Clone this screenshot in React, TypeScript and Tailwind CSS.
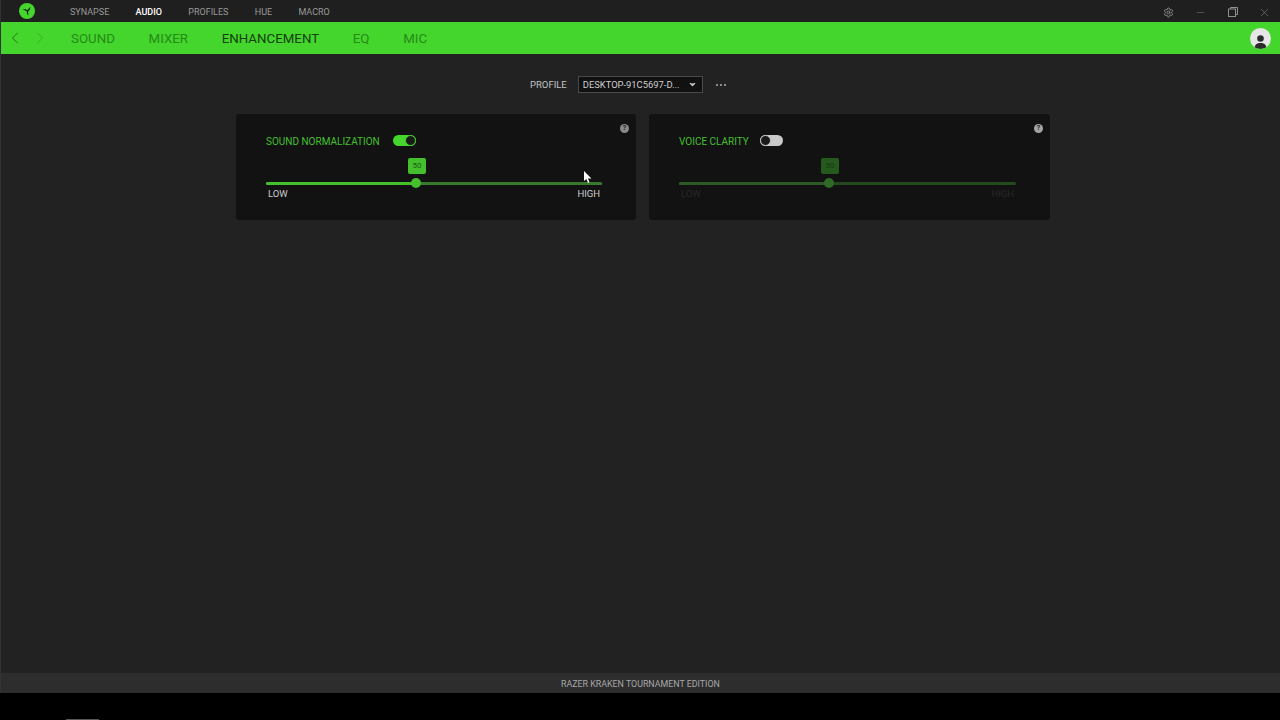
import { Settings, Minus, X, ChevronLeft, ChevronRight, ChevronDown } from 'lucide-react';

const topTabs = ['SYNAPSE', 'AUDIO', 'PROFILES', 'HUE', 'MACRO'];
const subTabs = ['SOUND', 'MIXER', 'ENHANCEMENT', 'EQ', 'MIC'];

const Logo = () => (
  <svg width="16" height="16" viewBox="0 0 16 16">
    <circle cx="8" cy="8" r="8" fill="#44d62c" />
    <path d="M8 8.4 L3.4 6 L6.6 6.2 L8.2 7.2 L11.6 3.8 L10.6 7 L9 8.6 L9.6 12.6 L7.8 10.6 Z" fill="#1a1a1a" />
  </svg>
);

const Help = ({ dim }: { dim?: boolean }) => (
  <div className={`absolute top-[10px] right-[7px] flex h-[9px] w-[9px] items-center justify-center rounded-full text-[7px] leading-none font-bold text-[#222] ${dim ? 'bg-[#a5a5a5]' : 'bg-[#8a8a8a]'}`}>
    ?
  </div>
);

const Card = ({ label, on }: { label: string; on: boolean }) => (
  <div className={`relative h-[106px] rounded-[3px] bg-[#121212] pt-[20px] pl-[30px] ${on ? 'w-[400px]' : 'w-[401px]'}`}>
    <Help dim={!on} />
    <div className="flex h-[14px] items-center">
      <span className="text-[10px] text-[#44c02f]">{label}</span>
      <span className={`mb-[2px] flex h-[11px] w-[23px] items-center rounded-full ${on ? 'ml-[13.5px] justify-end bg-[#44d62c]' : 'ml-[11.5px] justify-start bg-[#c9c9c9]'}`}>
        <span className={`h-[11px] w-[11px] rounded-full border bg-[#1a1a1a] ${on ? 'border-[#44d62c]' : 'border-[#c9c9c9]'}`} />
      </span>
    </div>
    <div className={`relative mt-[34px] h-[3px] rounded-full bg-[#24491f] ${on ? 'w-[336px]' : 'w-[337px]'}`}>
      {on && <div className="absolute inset-0 rounded-full bg-[#3a7a2e]" />}
      <div className={`absolute top-0 left-0 h-[3px] w-[150px] rounded-full ${on ? 'bg-[#44c02f]' : 'bg-[#2b5a24]'}`} />
      <div className={`absolute top-[-4px] left-[145px] h-[10px] w-[10px] rounded-full ${on ? 'bg-[#44c02f]' : 'bg-[#2f6a26]'}`} />
      <div className={`absolute top-[-24px] left-[142px] flex h-[16px] w-[18px] items-center justify-center rounded-[2px] text-[8px] ${on ? 'bg-[#44c02f] text-[#1d5c14]' : 'bg-[#255a1d] text-[#153a10]'}`}>
        50
      </div>
    </div>
    <div className={`mt-[2px] flex justify-between px-[2px] text-[9.5px] ${on ? 'w-[336px] text-[#cfcfcf]' : 'w-[337px] text-[#282828]'}`}>
      <span>LOW</span>
      <span>HIGH</span>
    </div>
  </div>
);

export default function App() {
  return (
    <div className="relative flex h-[720px] w-[1280px] flex-col overflow-hidden bg-black font-['Roboto',sans-serif]">
      <div className="flex h-[693px] flex-col border-l border-[#333] bg-[#222222]">
        {/* Title bar */}
        <div className="flex h-[22px] items-center bg-[#1f1f1f]">
          <div className="ml-[18px]"><Logo /></div>
          <div className="ml-[35px] flex gap-[26.3px] pt-[3px] text-[9px]">
            {topTabs.map((t) => (
              <span key={t} className={t === 'AUDIO' ? 'font-medium text-white' : 'text-[#9a9a9a]'}>{t}</span>
            ))}
          </div>
          <div className="ml-auto flex items-center pt-[2px] text-[#8f8f8f]">
            <Settings size={11} />
            <Minus size={11} strokeWidth={1} className="ml-[21px]" />
            <svg width="10" height="10" viewBox="0 0 10 10" className="ml-[22px]" fill="none" stroke="#8f8f8f">
              <rect x="0.5" y="2" width="7" height="7.5" />
              <path d="M2.5 2V0.5H9.5V7.5H7.5" />
            </svg>
            <X size={13} strokeWidth={1} className="mr-[9px] ml-[20px]" />
          </div>
        </div>

        {/* Green nav */}
        <div className="flex h-[32px] items-center bg-[#44d62c]">
          <ChevronLeft size={20} strokeWidth={1} className="ml-[4px] text-[#1c5c12]" />
          <ChevronRight size={20} strokeWidth={1} className="ml-[5px] text-[#35a823]" />
          <div className="ml-[21px] flex gap-[33.7px] pt-[1px] text-[13.3px]">
            {subTabs.map((t) => (
              <span key={t} className={t === 'ENHANCEMENT' ? 'text-[#14400c]' : 'text-[#268a18]'}>{t}</span>
            ))}
          </div>
          <div className="mr-[9px] ml-auto flex h-[21px] w-[21px] items-end justify-center overflow-hidden rounded-full bg-[#e6e6e6]">
            <svg width="13" height="16" viewBox="0 0 13 16" fill="#2a2a2a">
              <circle cx="6.5" cy="5.5" r="3.3" />
              <path d="M0.5 16C0.5 11.5 3 10 6.5 10S12.5 11.5 12.5 16Z" />
            </svg>
          </div>
        </div>

        {/* Profile */}
        <div className="mt-[20px] flex h-[21px] items-center">
          <span className="ml-[529px] pt-[1px] text-[9.5px] text-[#c4c4c4]">PROFILE</span>
          <div className="ml-[11px] flex h-[17px] w-[125px] items-center justify-between border border-[#4a4a4a] bg-[#111] pr-[5px] pl-[4px] text-[9.4px] text-[#d0d0d0]">
            <span className="pt-[1px]">DESKTOP-91C5697-D...</span>
            <ChevronDown size={9} strokeWidth={3} fill="#d0d0d0" />
          </div>
          <span className="ml-[13px] flex gap-[2px] pt-[1px]">
            <i className="h-[2px] w-[2px] rounded-full bg-[#b0b0b0]" />
            <i className="h-[2px] w-[2px] rounded-full bg-[#b0b0b0]" />
            <i className="h-[2px] w-[2px] rounded-full bg-[#b0b0b0]" />
          </span>
        </div>

        {/* Cards */}
        <div className="mt-[19px] flex gap-[13px] pl-[235px]">
          <Card label="SOUND NORMALIZATION" on />
          <Card label="VOICE CLARITY" on={false} />
        </div>

        <div className="mt-auto flex h-[20px] items-center justify-center bg-[#2d2d2d] pt-[3px] text-[8.85px] text-[#a8a8a8]">
          RAZER KRAKEN TOURNAMENT EDITION
        </div>
      </div>

      {/* Mouse pointer */}
      <svg className="absolute top-[171px] left-[584px]" width="8" height="13" viewBox="0 0 8 13">
        <path d="M0 0V10L2.4 8L4 12L5.5 11.3L4 7.5H7.5Z" fill="#fff" />
      </svg>
      {/* Sliver of the taskbar at the very bottom */}
      <div className="absolute bottom-0 left-[66px] h-[1px] w-[33px] bg-[#555]" />
    </div>
  );
}
